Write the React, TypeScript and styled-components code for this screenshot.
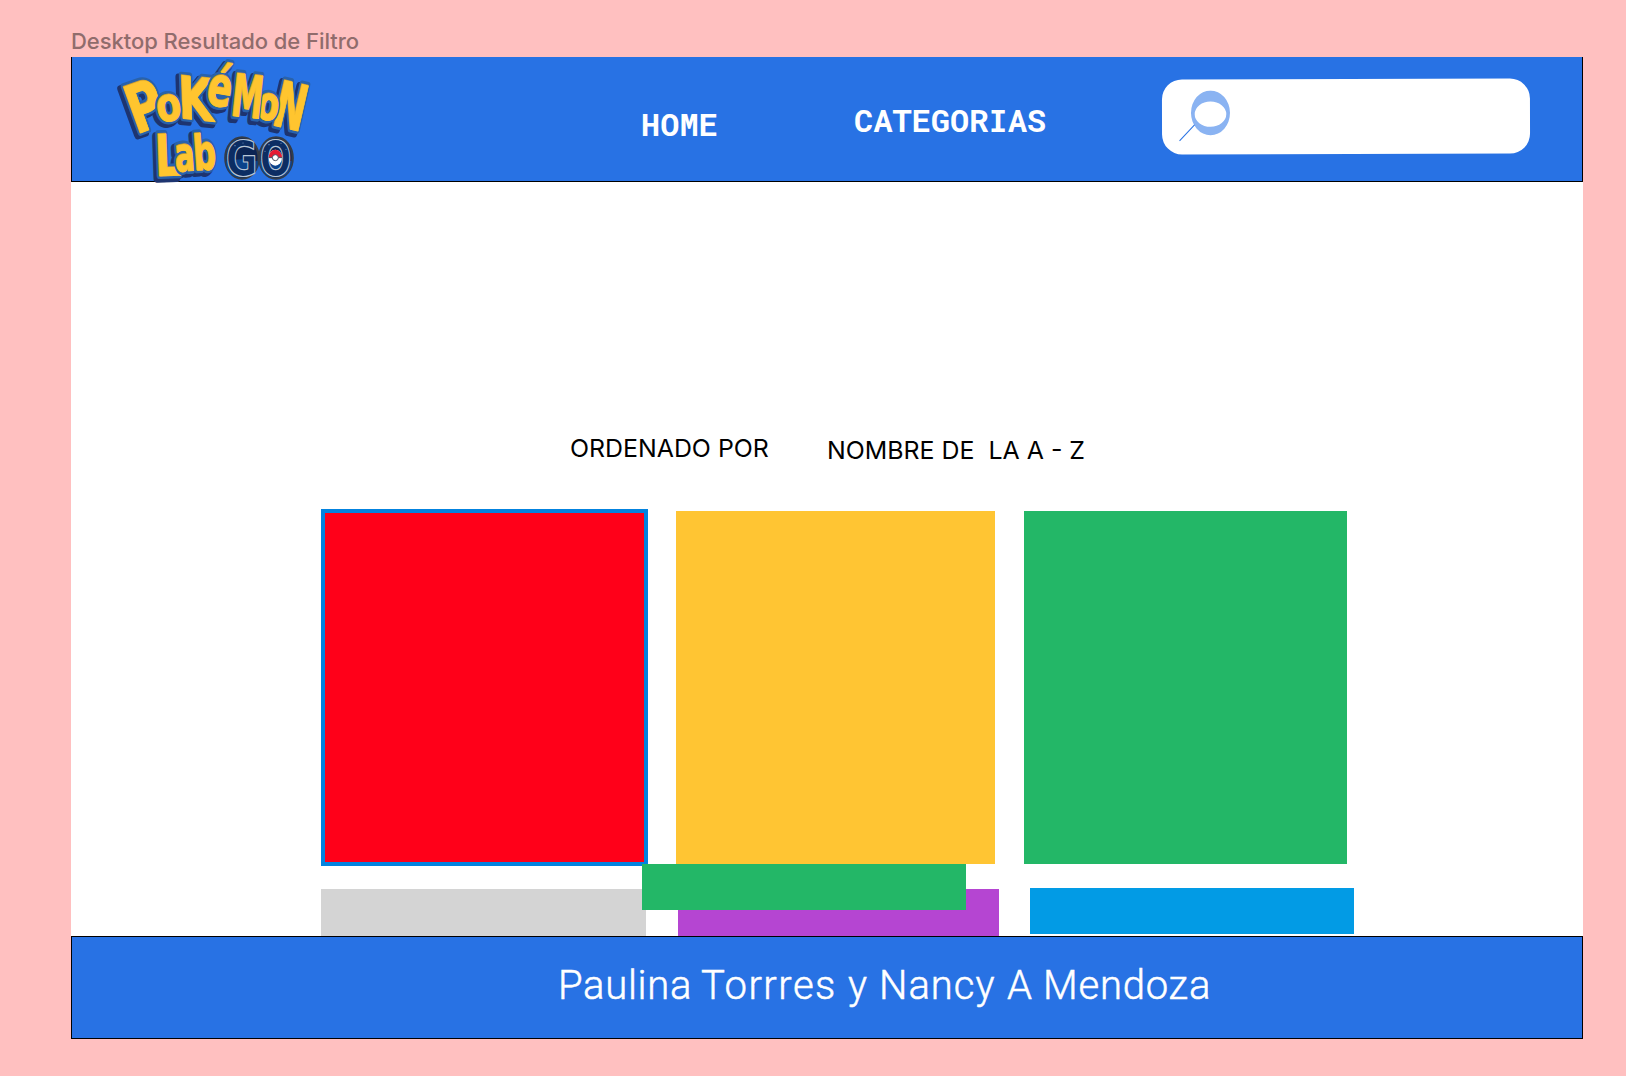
import React from "react";
import styled, { createGlobalStyle } from "styled-components";

const GlobalStyle = createGlobalStyle`
  * { box-sizing: border-box; }
  body { margin: 0; background: #ffc0c0; font-family: Inter, "Liberation Sans", sans-serif; }
`;

const Canvas = styled.div`
  width: 1626px;
  height: 1076px;
  padding: 0 43px 0 71px;
  overflow: hidden;
  background: #ffc0c0;
`;

const FrameTitle = styled.div`
  height: 57px;
  padding-top: 28px;
  font-size: 22px;
  font-weight: 450;
  letter-spacing: -0.05px;
  line-height: 26px;
  color: #906c6c;
  white-space: nowrap;
`;

const Frame = styled.main`
  display: flex;
  flex-direction: column;
  width: 1512px;
  height: 982px;
  background: #fff;
`;

const Header = styled.header`
  display: flex;
  align-items: flex-start;
  height: 125px;
  background: #2872e4;
  border: 1px solid #000;
  border-top: 0;
`;

const Logo = styled.svg`
  flex: none;
  width: 198px;
  height: 126px;
  margin-left: 42px;
  overflow: visible;
`;

const Nav = styled.nav`
  display: flex;
  align-items: flex-start;
  width: 851px;
  padding-left: 329px;
`;

const NavLink = styled.a<{ $top: number; $width: number }>`
  flex: none;
  width: ${(p) => p.$width}px;
  padding-top: ${(p) => p.$top}px;
  font: 700 32px/38px "Roboto Mono", "DejaVu Sans Mono", monospace;
  color: #fff;
`;

const SearchBox = styled.div`
  flex: none;
  width: 368px;
  height: 75px;
  margin-top: 22.4px;
  margin-left: -1px;
  padding: 11px 0 0 16px;
  background: #fff;
  border-radius: 20px;
  transform: rotate(-0.15deg);
`;

const SortBar = styled.div`
  display: flex;
  align-items: flex-start;
  height: 327px;
  padding: 251px 0 0 499px;
`;

const SortText = styled.span<{ $top?: number; $width: number }>`
  flex: none;
  width: ${(p) => p.$width}px;
  padding-top: ${(p) => p.$top ?? 0}px;
  font-size: 24.9px;
  line-height: 31px;
  color: #000;
  white-space: pre;
`;

const Row = styled.section`
  position: relative;
  display: flex;
  align-items: flex-start;
  padding-left: 250px;
`;

const Card = styled.div<{
  $w: number;
  $h: number;
  $color: string;
  $left?: number;
  $top?: number;
  $selected?: boolean;
}>`
  flex: none;
  width: ${(p) => p.$w}px;
  height: ${(p) => p.$h}px;
  margin-left: ${(p) => p.$left ?? 0}px;
  margin-top: ${(p) => p.$top ?? 0}px;
  background: ${(p) => p.$color};
  border: ${(p) => (p.$selected ? "4px solid #0383df" : "0")};
`;

const TopRow = styled(Row)`
  height: 357px;
`;

const BottomRow = styled(Row)`
  height: 70px;
  padding-top: 22px;
`;

const OverlapCard = styled.div`
  position: absolute;
  left: 571px;
  top: -2px;
  width: 324px;
  height: 46px;
  background: #23b767;
`;

const Footer = styled.footer`
  display: flex;
  height: 103px;
  padding: 24px 0 0 486px;
  background: #2872e4;
  border: 1px solid #000;
`;

const Word = styled.span<{ $w: number; $ls: number }>`
  flex: none;
  width: ${(p) => p.$w}px;
  font: 300 40px/50px Roboto, "Liberation Sans", sans-serif;
  letter-spacing: ${(p) => p.$ls}px;
  color: #fff;
  -webkit-text-stroke: 0.5px #fff;
  white-space: nowrap;
`;

type Glyph = { c: string; x: number; y: number; sx: number; sy: number; r: number; k?: number };

const letters: Glyph[] = [
  { c: "P", x: 277, y: 324, sx: 1.45, sy: 2.0, r: -20 },
  { c: "K", x: 408, y: 298, sx: 1.35, sy: 1.75, r: 6, k: 8 },
  { c: "o", x: 331, y: 301, sx: 1.08, sy: 1.4, r: -8 },
  { c: "é", x: 470, y: 256, sx: 1.08, sy: 1.65, r: 10 },
  { c: "N", x: 677, y: 323, sx: 1.12, sy: 1.9, r: 13 },
  { c: "o", x: 618, y: 298, sx: 0.95, sy: 1.4, r: 8 },
  { c: "M", x: 556, y: 290, sx: 0.94, sy: 1.75, r: 6 },
  { c: "L", x: 325, y: 466, sx: 1.2, sy: 1.72, r: -2 },
  { c: "a", x: 376, y: 452, sx: 0.88, sy: 1.42, r: -4 },
  { c: "b", x: 436, y: 448, sx: 0.95, sy: 1.45, r: -4 },
];

const goLetters: Glyph[] = [
  { c: "G", x: 545, y: 468, sx: 1.16, sy: 1.48, r: 0 },
  { c: "O", x: 647, y: 468, sx: 1.12, sy: 1.48, r: 0 },
];

const LogoText = styled.text`
  font: 700 100px "DejaVu Sans", sans-serif;
  text-anchor: middle;
  stroke-linejoin: round;
  vector-effect: non-scaling-stroke;
`;

type LogoGlyphProps = {
  g: Glyph;
  fill: string;
  stroke?: string;
  width: number;
  dx?: number;
  dy?: number;
};

function LogoGlyph({ g, fill, stroke, width, dx = 0, dy = 0 }: LogoGlyphProps) {
  return (
    <LogoText
      transform={`translate(${g.x + dx} ${g.y + dy}) rotate(${g.r}) skewX(${g.k ?? 0}) scale(${g.sx} ${g.sy})`}
      fill={fill}
      stroke={stroke ?? fill}
      strokeWidth={width}
    >
      {g.c}
    </LogoText>
  );
}

function PokemonLogo() {
  return (
    <Logo viewBox="162 111 594 378" aria-label="Pokémon Lab Go">
      {letters.map((g, i) => (
        <LogoGlyph key={i} g={g} fill="#1d3470" width={7.5} dx={-8} dy={8} />
      ))}
      {letters.map((g, i) => (
        <g key={i}>
          <LogoGlyph g={g} fill="#2962ab" width={6} />
          <LogoGlyph g={g} fill="#c79932" width={1.3} />
          <LogoGlyph g={g} fill="#ffc52f" width={0.8} dx={1.5} dy={1.5} />
        </g>
      ))}
      <ellipse cx="546" cy="414" rx="50" ry="62" fill="#0b2453" stroke="#343c48" strokeWidth="7" />
      <ellipse cx="648" cy="414" rx="50" ry="62" fill="#0b2453" stroke="#343c48" strokeWidth="7" />
      <path d="M498 424q48-12 96 0q-3 48-48 48t-48-48zM600 424q48-12 96 0q-3 48-48 48t-48-48z" fill="#0b438b" />
      {goLetters.map((g, i) => (
        <LogoGlyph key={i} g={g} fill="#0c2d63" stroke="#b9c6d6" width={1.1} />
      ))}
      <g fill="#83a7d2">
        <circle cx="525" cy="377" r="1.8" />
        <circle cx="549" cy="369" r="1.5" />
        <circle cx="627" cy="374" r="1.8" />
        <circle cx="663" cy="370" r="1.5" />
        <circle cx="615" cy="394" r="1.5" />
        <circle cx="678" cy="388" r="1.5" />
      </g>
      <ellipse cx="646" cy="413" rx="20" ry="24" fill="#fff" />
      <path d="M626 413a20 24 0 0 1 40 0z" fill="#e51b31" />
      <path d="M626 413h40" stroke="#4c5260" strokeWidth="3" />
      <circle cx="646" cy="413" r="9" fill="#fff" stroke="#4c5260" strokeWidth="3" />
    </Logo>
  );
}

export default function App() {
  return (
    <>
      <GlobalStyle />
      <Canvas>
        <FrameTitle>Desktop Resultado de Filtro</FrameTitle>
        <Frame>
          <Header>
            <PokemonLogo />
            <Nav>
              <NavLink $top={48} $width={213}>HOME</NavLink>
              <NavLink $top={44} $width={194}>CATEGORIAS</NavLink>
            </Nav>
            <SearchBox>
              <svg width="64" height="54" viewBox="1178 90.5 64 54" aria-label="Buscar">
                <ellipse cx="1210.5" cy="113" rx="19.5" ry="22.4" fill="#8ab3f2" />
                <ellipse cx="1210.5" cy="114.3" rx="15.8" ry="12.7" fill="#fff" />
                <path d="M1194.5 125l-15 16" stroke="#2872e4" strokeWidth="1" />
              </svg>
            </SearchBox>
          </Header>
          <SortBar>
            <SortText $width={257}>ORDENADO POR</SortText>
            <SortText $width={270} $top={2}>{"NOMBRE DE  LA A - Z"}</SortText>
          </SortBar>
          <TopRow>
            <Card $w={327} $h={357} $color="#ff0019" $selected />
            <Card $w={319} $h={353} $left={28} $top={2} $color="#ffc533" />
            <Card $w={323} $h={353} $left={29} $top={2} $color="#23b767" />
          </TopRow>
          <BottomRow>
            <Card $w={325} $h={47} $top={1} $color="#d4d4d4" />
            <Card $w={321} $h={47} $left={32} $top={1} $color="#b545d2" />
            <Card $w={324} $h={46} $left={31} $color="#029be5" />
            <OverlapCard />
          </BottomRow>
          <Footer>
            <Word $w={143} $ls={0.7}>Paulina</Word>
            <Word $w={147} $ls={1.5}>Torrres</Word>
            <Word $w={31} $ls={0}>y</Word>
            <Word $w={128} $ls={1}>Nancy</Word>
            <Word $w={36} $ls={0}>A</Word>
            <Word $w={180} $ls={0.8}>Mendoza</Word>
          </Footer>
        </Frame>
      </Canvas>
    </>
  );
}
